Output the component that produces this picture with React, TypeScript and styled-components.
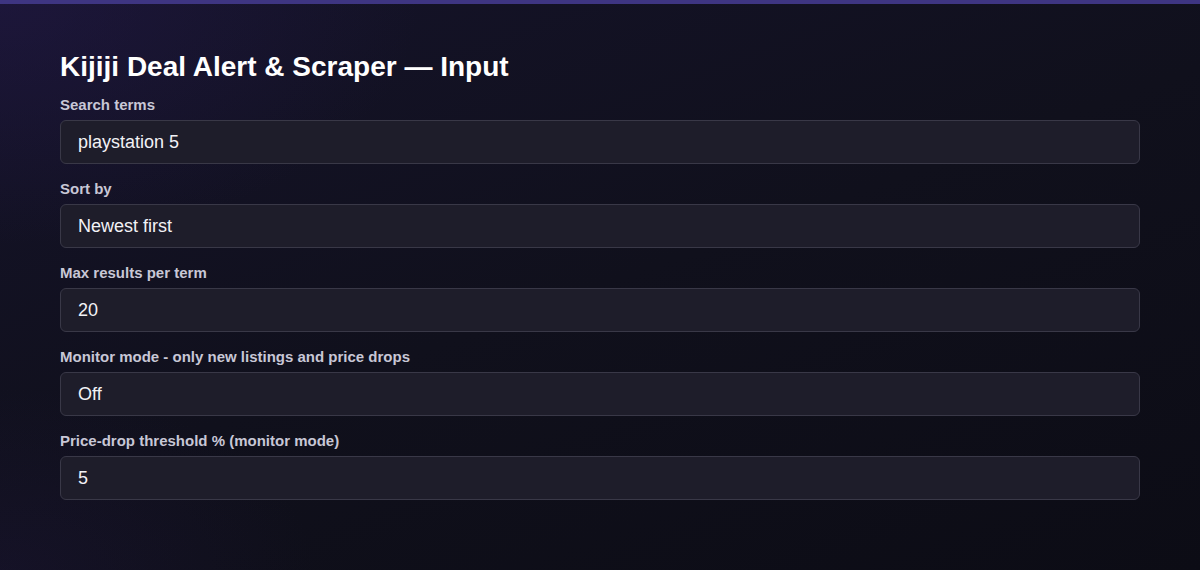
import React from 'react'
import styled, { createGlobalStyle } from 'styled-components'

const GlobalStyle = createGlobalStyle`
  html, body {
    margin: 0;
    padding: 0;
    background: #0e0e18;
  }
  body {
    font-family: "Liberation Sans", Arial, sans-serif;
  }
`

const fields = [
  { label: 'Search terms', value: 'playstation 5' },
  { label: 'Sort by', value: 'Newest first' },
  { label: 'Max results per term', value: '20' },
  { label: 'Monitor mode - only new listings and price drops', value: 'Off' },
  { label: 'Price-drop threshold % (monitor mode)', value: '5' },
]

function App() {
  return (
    <>
      <GlobalStyle />
      <Page>
        <TopBar />
        <Form>
          <Title>Kijiji Deal Alert &amp; Scraper — Input</Title>
          {fields.map((f) => (
            <Field key={f.label}>
              <Label>{f.label}</Label>
              <InputBox>{f.value}</InputBox>
            </Field>
          ))}
        </Form>
      </Page>
    </>
  )
}

const Page = styled.div`
  height: 570px;
  overflow: hidden;
  background:
    radial-gradient(ellipse 600px 350px at 0% 0%, rgba(38, 26, 78, 0.45), transparent 70%),
    radial-gradient(ellipse 450px 260px at 0% 100%, rgba(34, 24, 66, 0.3), transparent 70%),
    linear-gradient(160deg, #15132a 0%, #10101c 50%, #0c0c15 100%);
`

const TopBar = styled.div`
  height: 4px;
  background: #3e3582;
`

const Form = styled.section`
  width: 1080px;
  padding: 46px 60px 0;
  display: flex;
  flex-direction: column;
`

const Title = styled.h1`
  margin: 0 0 12px;
  font-size: 28px;
  line-height: 34px;
  font-weight: 700;
  color: #ffffff;
`

const Field = styled.div`
  display: flex;
  flex-direction: column;
  margin-bottom: 16px;
`

const Label = styled.label`
  font-size: 15px;
  line-height: 18px;
  font-weight: 700;
  color: #c8c7d6;
  margin-bottom: 6px;
`

const InputBox = styled.div`
  box-sizing: border-box;
  height: 44px;
  display: flex;
  align-items: center;
  padding: 0 17px;
  font-size: 18px;
  color: #f2f2f6;
  background: #1e1d2a;
  border: 1px solid #393847;
  border-radius: 6px;
`

export default App
